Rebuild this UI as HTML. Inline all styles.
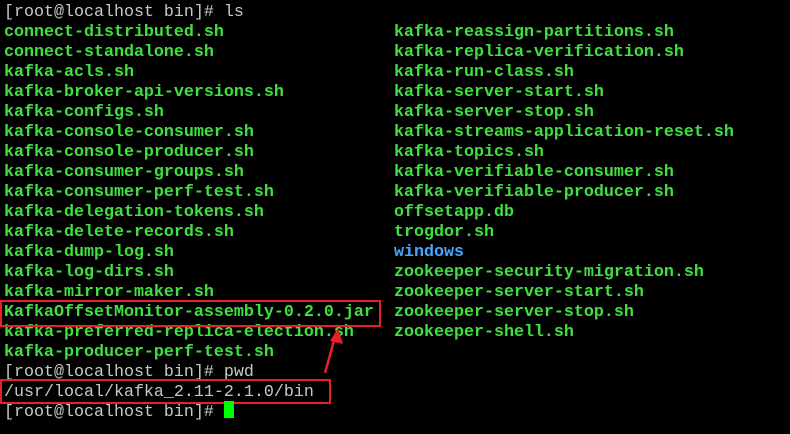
<!DOCTYPE html>
<html><head><style>
html,body{margin:0;padding:0;background:#000;width:790px;height:434px;overflow:hidden}
.t{position:absolute;left:4px;top:3px;font-family:"Liberation Mono",monospace;font-size:16.67px;line-height:20px;white-space:pre;color:#40e040;font-weight:bold}
.c2{left:394px}
.p{color:#c8c8c8;font-weight:normal}
.b{color:#44a8ff}
.box{position:absolute;border:2px solid #e8202a;box-sizing:border-box}
</style></head><body>
<div class="t"><span class="p">[root@localhost bin]# ls</span>
connect-distributed.sh
connect-standalone.sh
kafka-acls.sh
kafka-broker-api-versions.sh
kafka-configs.sh
kafka-console-consumer.sh
kafka-console-producer.sh
kafka-consumer-groups.sh
kafka-consumer-perf-test.sh
kafka-delegation-tokens.sh
kafka-delete-records.sh
kafka-dump-log.sh
kafka-log-dirs.sh
kafka-mirror-maker.sh
KafkaOffsetMonitor-assembly-0.2.0.jar
kafka-preferred-replica-election.sh
kafka-producer-perf-test.sh
<span class="p">[root@localhost bin]# pwd
/usr/local/kafka_2.11-2.1.0/bin
[root@localhost bin]# </span></div>
<div class="t c2">
kafka-reassign-partitions.sh
kafka-replica-verification.sh
kafka-run-class.sh
kafka-server-start.sh
kafka-server-stop.sh
kafka-streams-application-reset.sh
kafka-topics.sh
kafka-verifiable-consumer.sh
kafka-verifiable-producer.sh
offsetapp.db
trogdor.sh
<span class="b">windows</span>
zookeeper-security-migration.sh
zookeeper-server-start.sh
zookeeper-server-stop.sh
zookeeper-shell.sh</div>
<div class="box" style="left:0;top:300px;width:381px;height:27px"></div>
<div class="box" style="left:0;top:379px;width:331px;height:25px"></div>
<div style="position:absolute;left:224px;top:401px;width:10px;height:17px;background:#00ff00"></div>
<svg style="position:absolute;left:0;top:0" width="790" height="434">
<line x1="325" y1="373" x2="335" y2="337" stroke="#e8202a" stroke-width="2.5"/>
<polygon points="338,328 343,344 330,341" fill="#e8202a"/>
</svg>
</body></html>
